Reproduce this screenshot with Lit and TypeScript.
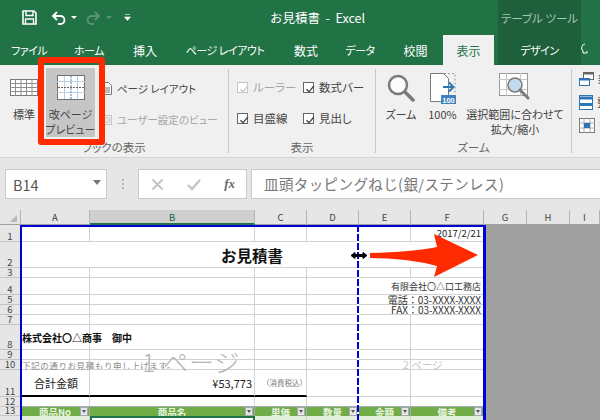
import {LitElement, html, css} from 'lit';
import {customElement} from 'lit/decorators.js';

const TABS = [
  {label: 'ファイル', cls: 'kana'},
  {label: 'ホーム', cls: 'kana'},
  {label: '挿入', cls: ''},
  {label: 'ページ レイアウト', cls: 'kana'},
  {label: '数式', cls: ''},
  {label: 'データ', cls: 'kana'},
  {label: '校閲', cls: ''},
  {label: '表示', cls: 'active'},
  {label: '', cls: ''},
  {label: 'デザイン', cls: 'tool kana'},
];

const ROW_COUNT = 14;
const COLUMNS = ['A', 'B', 'C', 'D', 'E', 'F'];
const HEADERS = ['商品No', '商品名', '単価', '数量', '金額', '備考'];

const check = html`<svg class="check" width="12" height="12" viewBox="0 0 12 12">
  <path d="M2.5 6.2 5 8.8 9.8 3" fill="none" stroke="currentColor" stroke-width="1.3" />
</svg>`;

const filterBtn = html`<span class="filter"><i></i></span>`;

@customElement('app-root')
export class AppRoot extends LitElement {
  static styles = css`
    :host {
      display: block;
      width: 600px;
      height: 420px;
      overflow: hidden;
      position: relative;
      background: #fff;
      font-family: 'Noto Sans CJK JP', 'Noto Sans', sans-serif;
      color: #444;
    }

    .titlebar {
      height: 35px;
      background: #217346;
      display: flex;
      align-items: center;
      color: #fff;
      position: relative;
    }
    .qat {
      display: flex;
      align-items: center;
      padding-left: 22px;
      width: 270px;
      box-sizing: border-box;
    }
    .qat svg {
      display: block;
    }
    .caret {
      width: 0;
      height: 0;
      border: 3px solid transparent;
      border-top: 3px solid #fff;
      border-bottom: 0;
      margin-left: 5px;
    }
    .caret.dim {
      border-top-color: #5d9275;
    }
    .undo {
      margin-left: 14px;
    }
    .redo {
      margin-left: 9px;
    }
    .more {
      margin-left: 12px;
    }
    .title {
      font-size: 12.5px;
      white-space: pre;
      width: 228px;
    }
    .toolhead {
      width: 83px;
      height: 35px;
      background: #1e5f3c;
      color: #a9c7b6;
      font-size: 11.5px;
      display: flex;
      align-items: center;
      justify-content: center;
      white-space: pre;
      font-feature-settings: 'palt';
    }

    .tabs {
      height: 30px;
      background: #217346;
      display: grid;
      grid-template-columns: 58px 62px 50px 110px 52px 56px 55px 51px 4px 83px 19px;
      color: #fff;
      font-size: 12px;
      font-feature-settings: 'palt';
    }
    .tab {
      display: flex;
      align-items: center;
      justify-content: center;
      white-space: pre;
    }
    .tab.kana {
      font-size: 11px;
      letter-spacing: -0.5px;
    }
    .tab.active {
      background: #f0f0f0;
      color: #217346;
    }
    .tab.tool {
      background: #1e5f3c;
    }
    .bulb {
      display: flex;
      align-items: center;
    }

    .ribbon {
      height: 93px;
      box-sizing: border-box;
      background: #f0f0f0;
      border-bottom: 1px solid #d4d4d4;
      display: flex;
      font-size: 11.5px;
      font-feature-settings: 'palt';
      overflow: hidden;
      padding-top: 3px;
    }
    .group {
      display: flex;
      flex-direction: column;
      flex: none;
    }
    .group-body {
      height: 69px;
      display: flex;
    }
    .group-label {
      height: 20px;
      line-height: 20px;
      text-align: center;
      font-size: 11.5px;
      color: #666;
    }
    .sep {
      width: 1px;
      flex: none;
      margin: 1px 0 4px;
      background: #c6c6c6;
    }
    .g-views {
      width: 228px;
    }
    .g-views .group-body {
      padding-left: 6px;
    }
    .g-show {
      width: 146px;
    }
    .g-zoom {
      width: 195px;
    }
    .g-window {
      width: 29px;
    }

    .big {
      display: flex;
      flex-direction: column;
      align-items: center;
      flex: none;
      height: 69px;
      font-size: 11px;
      line-height: 15px;
      text-align: center;
      white-space: nowrap;
      color: #444;
    }
    .big .ico {
      height: 39px;
      display: flex;
      align-items: center;
      justify-content: center;
    }
    .big.std {
      width: 36px;
    }
    .big.pagebreak {
      width: 49px;
      margin-left: 4px;
      background: #c6c6c6;
    }
    .big.w-zoom {
      width: 50px;
    }
    .big.w-100 {
      width: 33px;
    }
    .big.w-fit {
      width: 112px;
    }

    .views-list {
      display: flex;
      flex-direction: column;
      gap: 11px;
      padding: 10px 0 0 7px;
      white-space: nowrap;
      font-size: 10.5px;
    }
    .views-row {
      display: flex;
      align-items: center;
      height: 20px;
      gap: 5px;
    }
    .views-row svg {
      flex: none;
      display: block;
    }
    .dim {
      color: #a6a6a6;
    }

    .checks {
      display: grid;
      grid-template-columns: 66px 66px;
      grid-auto-rows: 20px;
      row-gap: 11px;
      padding: 9px 0 0 8px;
    }
    .chk {
      display: flex;
      align-items: center;
      gap: 5px;
      white-space: nowrap;
    }
    .chk .box {
      width: 11px;
      height: 11px;
      border: 1px solid #666;
      background: #fff;
      color: #444;
      display: block;
      flex: none;
    }
    .check {
      display: block;
    }
    .chk.dim .box {
      border-color: #c6c6c6;
      color: #c6c6c6;
    }

    .win-list {
      display: flex;
      flex-direction: column;
      gap: 7px;
      padding: 3px 0 0 7px;
    }
    .win-row {
      display: flex;
      align-items: center;
      gap: 4px;
      height: 16px;
      white-space: nowrap;
    }
    .win-row svg {
      flex: none;
      display: block;
    }

    .formula {
      height: 52px;
      box-sizing: border-box;
      background: #e6e6e6;
      padding: 11px 0 0 5px;
      display: flex;
    }
    .box {
      height: 30px;
      box-sizing: border-box;
      background: #fff;
      border: 1px solid #c8c8c8;
      flex: none;
    }
    .namebox {
      width: 102px;
      display: flex;
      align-items: center;
      justify-content: space-between;
      padding: 0 5px 0 7px;
      font-size: 14.5px;
      color: #555;
    }
    .namebox i {
      border: 4px solid transparent;
      border-top: 5px solid #777;
      border-bottom: 0;
      margin-top: -3px;
    }
    .grip {
      width: 31px;
      flex: none;
      display: flex;
      flex-direction: column;
      align-items: center;
      justify-content: center;
      gap: 2px;
      height: 30px;
    }
    .grip i {
      width: 2px;
      height: 2px;
      background: #b5b5b5;
    }
    .fbtns {
      width: 109px;
      display: flex;
      align-items: center;
      justify-content: space-between;
      padding: 0 11px 0 12px;
    }
    .fx {
      font-family: 'Liberation Serif', serif;
      font-style: italic;
      font-weight: bold;
      font-size: 13px;
      color: #666;
    }
    .finput {
      flex: 1;
      margin-left: 4px;
      border-right: 0;
      padding-left: 12px;
      font-size: 14.5px;
      line-height: 27px;
      color: #777;
      letter-spacing: 0.4px;
      white-space: nowrap;
    }

    .sheet {
      display: grid;
      grid-template-columns: 21px 69px 165px 52px 52px 52px 73px 43px 43px 30px;
      grid-template-rows: 15px 17px 26px 10px 17px 10px 10px 10px 25px 10px 10px 27px 10px 9px 20px;
      background: #fff;
      font-size: 11px;
      color: #222;
      height: 210px;
      overflow: hidden;
    }
    .hd {
      background: #e6e6e6;
      box-sizing: border-box;
      display: flex;
      align-items: center;
      justify-content: center;
      font-size: 9.5px;
      color: #444;
      overflow: hidden;
    }
    .hd.col {
      border-right: 1px solid #b4b4b4;
      border-bottom: 1px solid #9e9e9e;
    }
    .hd.col.sel {
      background: #cfcfcf;
      border-bottom: 2px solid #217346;
      color: #1c5f3a;
    }
    .hd.row {
      border-right: 1px solid #9e9e9e;
      border-bottom: 1px solid #c4c4c4;
      align-items: flex-end;
      line-height: 10px;
    }
    .corner {
      align-items: flex-end;
      justify-content: flex-end;
      padding: 0 3px 2px 0;
    }
    .corner i {
      border-left: 7px solid transparent;
      border-bottom: 7px solid #b8b8b8;
    }
    .cell {
      box-sizing: border-box;
      border-right: 1px solid #d2d2d2;
      border-bottom: 1px solid #d2d2d2;
      display: flex;
      align-items: center;
      white-space: nowrap;
      min-width: 0;
      padding: 0 2px;
    }
    .cell.right {
      justify-content: flex-end;
    }
    .span2 {
      grid-column: span 2;
    }
    .span6 {
      grid-column: span 6;
    }
    .doc-title {
      justify-content: center;
      font-size: 15.5px;
      font-weight: bold;
      color: #111;
    }
    .date {
      font-size: 9.5px;
    }
    .addr {
      font-size: 9px;
      color: #333;
    }
    .addr.wide {
      font-size: 10px;
    }
    .client {
      font-size: 10px;
      font-weight: bold;
      color: #111;
      padding-left: 1px;
    }
    .note {
      font-size: 8.5px;
      color: #8a8a8a;
      letter-spacing: 0.6px;
      padding-left: 1px;
    }
    .sum {
      padding-left: 13px;
      font-size: 11px;
    }
    .taxnote {
      font-size: 7.5px;
      color: #777;
      padding-left: 7px;
    }
    .thick {
      border-bottom: 2px solid #000;
    }
    .th {
      background: #70ad47;
      color: #e9f3e2;
      font-size: 9.5px;
      font-weight: bold;
      justify-content: center;
      position: relative;
      overflow: hidden;
      margin-top: -1px;
      border-top: 1px solid #a3a9b5;
      border-right: 1px solid #a3a9b5;
      border-bottom: 0;
    }
    .filter {
      position: absolute;
      right: 1px;
      top: 0;
      width: 8px;
      height: 9px;
      background: #e6e6e6;
      border: 1px solid #a3a9b5;
      box-sizing: border-box;
      display: flex;
      align-items: center;
      justify-content: center;
    }
    .filter i {
      border: 2.5px solid transparent;
      border-top: 3px solid #555;
      border-bottom: 0;
    }
    .td {
      background: #e2efda;
      font-size: 9.5px;
      align-items: flex-start;
      border-right: 1px solid #d2d2d2;
      border-bottom: 0;
      line-height: 14px;
      overflow: hidden;
    }
    .td.selcell {
      border: 2px solid #217346;
      border-bottom: 0;
      background: #fff;
      color: #666;
    }
    .outside {
      grid-column: 8 / span 3;
      grid-row: 2 / span 14;
      background: #a0a0a0;
    }

    .overlay {
      position: absolute;
      pointer-events: none;
    }
    .pb-left {
      left: 20px;
      top: 225px;
      width: 2px;
      height: 195px;
      background: #0000d8;
    }
    .pb-top {
      left: 20px;
      top: 225px;
      width: 466px;
      height: 2px;
      background: #0000d8;
    }
    .pb-right {
      left: 483px;
      top: 225px;
      width: 3px;
      height: 195px;
      background: #0000d8;
    }
    .pb-mid {
      left: 357px;
      top: 225px;
      width: 2px;
      height: 195px;
      background: repeating-linear-gradient(#0000e0 0 7px, #fff 7px 9px);
    }
    .wm1 {
      left: 142px;
      top: 346px;
      font-size: 25px;
      line-height: 30px;
      color: #b4b4b4;
      font-weight: 300;
      letter-spacing: 1px;
      white-space: pre;
    }
    .wm2 {
      left: 403px;
      top: 358px;
      font-size: 10.5px;
      line-height: 14px;
      color: #c8c8c8;
      white-space: pre;
    }
    .redbox {
      left: 38px;
      top: 57px;
      width: 67px;
      height: 88px;
      box-sizing: border-box;
      border: 6px solid #ff2a00;
      border-radius: 3px;
    }
    .marks {
      left: 0;
      top: 0;
    }
  `;

  renderCells(row: number) {
    switch (row) {
      case 2:
        return html`<div class="cell span6 doc-title">お見積書</div>`;
      case 1:
        return html`${COLUMNS.slice(0, 5).map(() => html`<div class="cell"></div>`)}
          <div class="cell right date">2017/2/21</div>`;
      case 4:
        return html`${COLUMNS.slice(0, 4).map(() => html`<div class="cell"></div>`)}
          <div class="cell span2 right addr">有限会社〇△口工務店</div>`;
      case 5:
      case 6:
        return html`${COLUMNS.slice(0, 4).map(() => html`<div class="cell"></div>`)}
          <div class="cell span2 right addr wide">
            ${row === 5 ? '電話：03-XXXX-XXXX' : 'FAX：03-XXXX-XXXX'}
          </div>`;
      case 8:
        return html`<div class="cell client">株式会社〇△商事　御中</div>
          ${COLUMNS.slice(1).map(() => html`<div class="cell"></div>`)}`;
      case 10:
        return html`<div class="cell note">下記の通りお見積もり申し上げます。</div>
          ${COLUMNS.slice(1).map(() => html`<div class="cell"></div>`)}`;
      case 11:
        return html`<div class="cell thick sum">合計金額</div>
          <div class="cell thick right">¥53,773</div>
          <div class="cell thick taxnote">（消費税込）</div>
          <div class="cell"></div>
          <div class="cell"></div>
          <div class="cell"></div>`;
      case 13:
        return HEADERS.map((h) => html`<div class="cell th">${h}${filterBtn}</div>`);
      case 14:
        return html`<div class="cell td">C001-001</div>
          <div class="cell td selcell">皿頭タッピングねじ(銀/ステンレス)</div>
          <div class="cell td right">57</div>
          <div class="cell td right">300</div>
          <div class="cell td right">17,100</div>
          <div class="cell td"></div>`;
      default:
        return COLUMNS.map(() => html`<div class="cell"></div>`);
    }
  }

  renderSheet() {
    const rows = Array.from({length: ROW_COUNT}, (_, i) => i + 1);
    return html`<div class="sheet">
      <div class="hd col corner"><i></i></div>
      ${[...COLUMNS, 'G', 'H', 'I'].map(
        (c) => html`<div class="hd col ${c === 'B' ? 'sel' : ''}">${c}</div>`
      )}
      <div class="outside"></div>
      ${rows.map(
        (r) => html`<div class="hd row">${r}</div>
          ${this.renderCells(r)}`
      )}
    </div>`;
  }

  renderRibbon() {
    return html`<div class="ribbon">
      <div class="group g-views">
        <div class="group-body">
          <div class="big std">
            <div class="ico">
              <svg width="28" height="17" viewBox="0 0 28 17">
                <rect x=".5" y=".5" width="27" height="16" fill="#fff" stroke="#777" />
                <path d="M0 4.5h28M0 8.5h28M0 12.5h28M5.5 0v17M11 0v17M16.500 0v17M22 0v17" stroke="#8c8c8c" fill="none" />
              </svg>
            </div>
            標準
          </div>
          <div class="big pagebreak">
            <div class="ico">
              <svg width="28" height="25" viewBox="0 0 28 25">
                <rect x=".5" y=".5" width="27" height="24" fill="#fff" stroke="#6f6f6f" />
                <path d="M0 6.500h28M0 17.500h28M7.500 1v23M20.500 1v23" stroke="#b5d2ec" fill="none" />
                <path d="M14 1v23" stroke="#5c7f9f" stroke-dasharray="2 1" fill="none" />
                <path d="M1 12.500h26" stroke="#666" stroke-dasharray="2 1" fill="none" />
              </svg>
            </div>
            改ページ<br />プレビュー
          </div>
          <div class="views-list">
            <div class="views-row">
              <svg width="10" height="13" viewBox="0 0 10 13">
                <path d="M.5.500h6l3 3v9h-9zM2 6h6M2 8h6M2 10h6" fill="#fff" stroke="#777" />
              </svg>
              ページ レイアウト
            </div>
            <div class="views-row dim">
              <svg width="10" height="13" viewBox="0 0 10 13">
                <path d="M.5 2.500h9v9h-9zM2.500 5h5v4h-5z" fill="none" stroke="#c4c4c4" />
              </svg>
              ユーザー設定のビュー
            </div>
          </div>
        </div>
        <div class="group-label">ブックの表示</div>
      </div>
      <div class="sep"></div>

      <div class="group g-show">
        <div class="group-body">
          <div class="checks">
            <div class="chk dim"><span class="box">${check}</span>ルーラー</div>
            <div class="chk"><span class="box">${check}</span>数式バー</div>
            <div class="chk"><span class="box">${check}</span>目盛線</div>
            <div class="chk"><span class="box">${check}</span>見出し</div>
          </div>
        </div>
        <div class="group-label">表示</div>
      </div>
      <div class="sep"></div>

      <div class="group g-zoom">
        <div class="group-body">
          <div class="big w-zoom">
            <div class="ico">
              <svg width="28" height="28" viewBox="0 0 28 28">
                <circle cx="11" cy="11" r="9" fill="#fbfbfb" stroke="#7a7a7a" stroke-width="2.500" />
                <path d="M18 18l8 8" stroke="#7a7a7a" stroke-width="3.500" stroke-linecap="round" />
              </svg>
            </div>
            ズーム
          </div>
          <div class="big w-100">
            <div class="ico">
              <svg width="28" height="32" viewBox="0 0 28 32">
                <path d="M1.500 1.500h13l5 5v23h-18z" fill="#fff" stroke="#7a7a7a" />
                <path d="M15 1.500h11v21" fill="none" stroke="#999" stroke-dasharray="2 2" />
                <path d="M14 15h10M20 10.500l4.500 4.500-4.500 4.500" fill="none" stroke="#2f75b5" stroke-width="2" />
                <rect x="12" y="23" width="15" height="9" fill="#3f7fbf" />
                <text x="19.500" y="30.500" font-size="7.500" font-weight="bold" fill="#fff" text-anchor="middle" font-family="Liberation Sans">100</text>
              </svg>
            </div>
            100%
          </div>
          <div class="big w-fit">
            <div class="ico">
              <svg width="32" height="29" viewBox="0 0 32 29">
                <rect x=".5" y=".5" width="28" height="22" fill="#fff" stroke="#999" />
                <path d="M0 6.500h28M0 16.500h28M7.500 0v23M21.500 0v23" stroke="#c6c6c6" fill="none" />
                <circle cx="16" cy="12" r="7" fill="#c3d9ee" stroke="#7a7a7a" stroke-width="1.500" />
                <path d="M21 17l8 8" stroke="#7a7a7a" stroke-width="3" stroke-linecap="round" />
              </svg>
            </div>
            選択範囲に合わせて<br />拡大/縮小
          </div>
        </div>
        <div class="group-label">ズーム</div>
      </div>
      <div class="sep"></div>

      <div class="group g-window">
        <div class="win-list">
          <div class="win-row">
            <svg width="15" height="14" viewBox="0 0 15 14">
              <rect x="4.500" y=".5" width="10" height="7" fill="#fff" stroke="#666" />
              <path d="M5 1.500h9" stroke="#666" stroke-width="2" />
              <rect x=".5" y="6.500" width="10" height="7" fill="#fff" stroke="#2f75b5" />
              <path d="M1 7.500h9" stroke="#2f75b5" stroke-width="2" />
            </svg>
            新
          </div>
          <div class="win-row">
            <svg width="14" height="15" viewBox="0 0 14 15">
              <rect x=".5" y=".5" width="13" height="14" fill="#fff" stroke="#2f75b5" />
              <path d="M1 3h12M1 9.500h12" stroke="#2f75b5" stroke-width="3" />
            </svg>
            整
          </div>
          <div class="win-row">
            <svg width="16" height="15" viewBox="0 0 16 15">
              <rect x=".5" y=".5" width="15" height="14" fill="#fff" stroke="#777" />
              <path d="M0 5h16M0 10h16M5 0v15M11 0v15" stroke="#aaa" />
              <rect x="5" y="5" width="6" height="5" fill="#2f75b5" />
            </svg>
            ウ
          </div>
        </div>
      </div>
    </div>`;
  }

  render() {
    return html`
      <div class="titlebar">
        <div class="qat">
          <svg width="15" height="15" viewBox="0 0 15 15">
            <path d="M1 1h11l2 2v11H1z" fill="none" stroke="#fff" stroke-width="1.600" />
            <path d="M4 1v4.500h7V1M3.500 14V9h8v5" fill="none" stroke="#fff" stroke-width="1.400" />
          </svg>
          <svg class="undo" width="15" height="14" viewBox="0 0 15 14">
            <path d="M6 1 2 5l4 4M2 5h7.500a3.500 3.500 0 0 1 0 8H7" fill="none" stroke="#fff" stroke-width="1.800" />
          </svg>
          <span class="caret"></span>
          <svg class="redo" width="15" height="14" viewBox="0 0 15 14">
            <path d="M9 1l4 4-4 4M13 5H5.500a3.500 3.500 0 0 0 0 8H8" fill="none" stroke="#5d9275" stroke-width="1.800" />
          </svg>
          <span class="caret dim"></span>
          <svg class="more" width="7" height="7" viewBox="0 0 7 7">
            <path d="M1 .5h5M.5 3l3 3.500 3-3.500z" fill="#fff" stroke="#fff" stroke-width=".6" />
          </svg>
        </div>
        <div class="title">お見積書  -  Excel</div>
        <div class="toolhead">テーブル ツール</div>
      </div>
      <div class="tabs">
        ${TABS.map((t) => html`<div class="tab ${t.cls}">${t.label}</div>`)}
        <div class="bulb">
          <svg width="8" height="14" viewBox="0 0 8 14">
            <path d="M4 1a4 4 0 0 0-2 7v2h4V8" fill="none" stroke="#fff" />
          </svg>
        </div>
      </div>
      ${this.renderRibbon()}
      <div class="formula">
        <div class="box namebox">B14<i></i></div>
        <div class="grip"><i></i><i></i><i></i></div>
        <div class="box fbtns">
          <svg width="13" height="13" viewBox="0 0 13 13">
            <path d="M1.500 1.500l10 10M11.500 1.500l-10 10" stroke="#c4c4c4" stroke-width="2" />
          </svg>
          <svg width="14" height="13" viewBox="0 0 14 13">
            <path d="M1 7l4 4 8-9" fill="none" stroke="#c4c4c4" stroke-width="2.400" />
          </svg>
          <span class="fx">fx</span>
        </div>
        <div class="box finput">皿頭タッピングねじ(銀/ステンレス)</div>
      </div>
      ${this.renderSheet()}

      <div class="overlay pb-left"></div>
      <div class="overlay pb-top"></div>
      <div class="overlay pb-mid"></div>
      <div class="overlay pb-right"></div>
      <div class="overlay wm1">1 ページ</div>
      <div class="overlay wm2">2 ページ</div>
      <div class="overlay redbox"></div>
      <svg class="overlay marks" width="600" height="420" viewBox="0 0 600 420">
        <path d="M351 255.500l4-3v2h8v-2l4 3-4 3v-2h-8v2z" fill="#000" stroke="#000" />
        <path d="M370 253q42-1 67-6l-3-13 44 21-44 22 3-11q-30-8-67-8z" fill="#ff2a00" />
      </svg>
    `;
  }
}
